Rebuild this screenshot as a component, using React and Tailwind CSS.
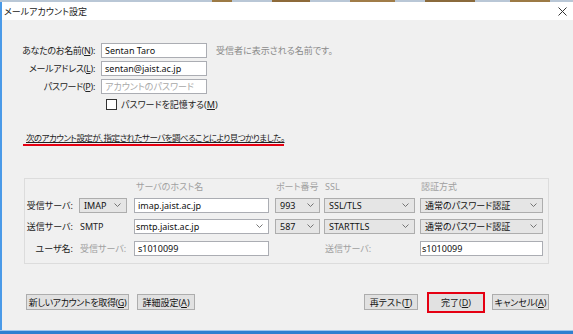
import React from "react";

function Select({ value, className = "" }) {
  return (
    <div
      className={`flex h-[15px] items-center justify-between border border-[#adadad] bg-[#e5e5e5] pl-[4px] pr-[5px] text-[#111] ${className}`}
    >
      <span>{value}</span>
      <svg width="7" height="4" viewBox="0 0 7 4" className="shrink-0">
        <path d="M0.5 0.5 L3.5 3.5 L6.5 0.5" fill="none" stroke="#666" strokeWidth="0.9" />
      </svg>
    </div>
  );
}

function Input({ value, placeholder, className = "", combo = false }) {
  return (
    <div
      className={`flex h-[15px] items-center justify-between border border-[#abadb3] bg-white px-[3px] ${className}`}
    >
      {value ? <span className="text-[#111]">{value}</span> : <span className="text-[#a8a8a8]">{placeholder}</span>}
      {combo && (
        <svg width="7" height="4" viewBox="0 0 7 4" className="mr-[2px] shrink-0">
          <path d="M0.5 0.5 L3.5 3.5 L6.5 0.5" fill="none" stroke="#666" strokeWidth="0.9" />
        </svg>
      )}
    </div>
  );
}

function Btn({ children, className = "" }) {
  return (
    <div
      className={`flex h-[16px] items-center justify-center whitespace-nowrap border border-[#adadad] bg-[#e1e1e1] text-[#111] ${className}`}
    >
      {children}
    </div>
  );
}

export default function App() {
  return (
    <div className="relative flex h-[334px] w-[573px] flex-col overflow-hidden bg-[#f0f0f0] font-['Noto_Sans','Noto_Sans_CJK_JP',sans-serif] text-[9px] leading-none [font-feature-settings:'palt']">
      {/* wallpaper strip */}
      <div className="flex h-[2px] bg-[#b9c7d6]">
        <div className="ml-[212px] w-[20px] bg-[#9c7a45]" />
        <div className="ml-[40px] w-[38px] bg-[#8d6a3a]" />
        <div className="ml-[40px] w-[45px] bg-[#a07c48]" />
        <div className="ml-[30px] w-[50px] bg-[#8a6a3c]" />
        <div className="ml-[35px] w-[40px] bg-[#9c7a45]" />
      </div>

      <div className="flex flex-1 flex-col border-l-2 border-[#4a9ae8]">
        {/* title bar */}
        <div className="flex h-[18px] items-center justify-between bg-white pl-[2px] pr-[6px] text-[#222]">
          <span>メールアカウント設定</span>
          <svg width="9" height="9" viewBox="0 0 9 9">
            <path d="M0.5 0.5 L8.5 8.5 M8.5 0.5 L0.5 8.5" stroke="#333" strokeWidth="1" />
          </svg>
        </div>

        {/* body */}
        <div className="flex flex-1 flex-col text-[#222]">
          {/* account fields */}
          <div className="mt-[23px] grid grid-cols-[99px_auto] items-center gap-y-[3px] text-[#222]">
            <span className="pr-[6px] text-right tracking-[-0.3px]">
              あなたのお名前(<span className="underline">N</span>):
            </span>
            <div className="flex items-center">
              <Input value="Sentan Taro" className="w-[106px]" />
              <span className="ml-[9px] text-[#8a8a8a]">受信者に表示される名前です。</span>
            </div>
            <span className="pr-[6px] text-right tracking-[-0.3px]">
              メールアドレス(<span className="underline">L</span>):
            </span>
            <Input value="sentan@jaist.ac.jp" className="w-[106px]" />
            <span className="pr-[6px] text-right tracking-[-0.3px]">
              パスワード(<span className="underline">P</span>):
            </span>
            <Input placeholder="アカウントのパスワード" className="w-[106px]" />
          </div>
          <div className="ml-[104px] mt-[5px] flex items-center">
            <div className="h-[11px] w-[11px] border border-[#333] bg-white" />
            <span className="ml-[4px]">
              パスワードを記憶する(<span className="underline">M</span>)
            </span>
          </div>

          {/* message */}
          <div className="ml-[21px] mt-[23px] w-[261px] border-b-2 border-[#e50012] px-[3px] pb-[1px]">
            <span className="whitespace-nowrap text-[8.5px] tracking-[-0.55px] underline">
              次のアカウント設定が、指定されたサーバを調べることにより見つかりました。
            </span>
          </div>

          {/* server group */}
          <div className="ml-[22px] mt-[32px] w-[525px] border border-[#dcdcdc] pb-[7px] pt-[3px]">
            <div className="grid grid-cols-[54px_55px_141px_49px_96px_123px] items-center">
              <span />
              <span />
              <span className="h-[14px] pl-[2px] text-[#a0a0a0]">サーバのホスト名</span>
              <span className="h-[14px] pl-[1px] text-[#a0a0a0]">ポート番号</span>
              <span className="h-[14px] pl-[1px] text-[#a0a0a0]">SSL</span>
              <span className="h-[14px] pl-[1px] text-[#a0a0a0]">認証方式</span>
            </div>
            <div className="mt-[2px] grid grid-cols-[54px_55px_141px_49px_96px_123px] items-center">
              <span className="pr-[6px] text-right">受信サーバ:</span>
              <Select value="IMAP" className="w-[48px]" />
              <Input value="imap.jaist.ac.jp" className="w-[135px]" />
              <Select value="993" className="w-[45px]" />
              <Select value="SSL/TLS" className="w-[91px]" />
              <Select value="通常のパスワード認証" className="w-[123px]" />
            </div>
            <div className="mt-[6px] grid grid-cols-[54px_55px_141px_49px_96px_123px] items-center">
              <span className="pr-[6px] text-right">送信サーバ:</span>
              <span className="pl-[1px]">SMTP</span>
              <Input value="smtp.jaist.ac.jp" combo className="w-[135px] pl-[1px]" />
              <Select value="587" className="w-[45px]" />
              <Select value="STARTTLS" className="w-[91px]" />
              <Select value="通常のパスワード認証" className="w-[123px]" />
            </div>
            <div className="mt-[7px] grid grid-cols-[54px_55px_141px_49px_96px_123px] items-center">
              <span className="pr-[6px] text-right">ユーザ名:</span>
              <span className="pl-[1px] text-[#a0a0a0]">受信サーバ:</span>
              <Input value="s1010099" className="w-[135px]" />
              <span />
              <span className="pl-[1px] text-[#a0a0a0]">送信サーバ:</span>
              <Input value="s1010099" className="w-[123px] pl-[1px]" />
            </div>
          </div>

          {/* buttons */}
          <div className="ml-[24px] mt-[28px] flex items-center">
            <Btn className="w-[103px] tracking-[-0.4px]">
              新しいアカウントを取得(<span className="underline">G</span>)
            </Btn>
            <Btn className="ml-[8px] w-[58px]">
              詳細設定(<span className="underline">A</span>)
            </Btn>
            <Btn className="ml-auto w-[54px] border-[#0078d7]">
              再テスト(<span className="underline">T</span>)
            </Btn>
            <div className="ml-[9px] flex h-[21px] w-[58px] items-center justify-center border-2 border-[#e50012] bg-[#e1e1e1]">
              完了(<span className="underline">D</span>)
            </div>
            <Btn className="ml-[7px] mr-[24px] w-[57px]">
              キャンセル(<span className="underline">A</span>)
            </Btn>
          </div>
        </div>
      </div>

      {/* taskbar edge */}
      <div className="h-[1px] bg-[#9fc6ee]" />
      <div className="h-[3px] bg-[#2f7fd0]" />
    </div>
  );
}
